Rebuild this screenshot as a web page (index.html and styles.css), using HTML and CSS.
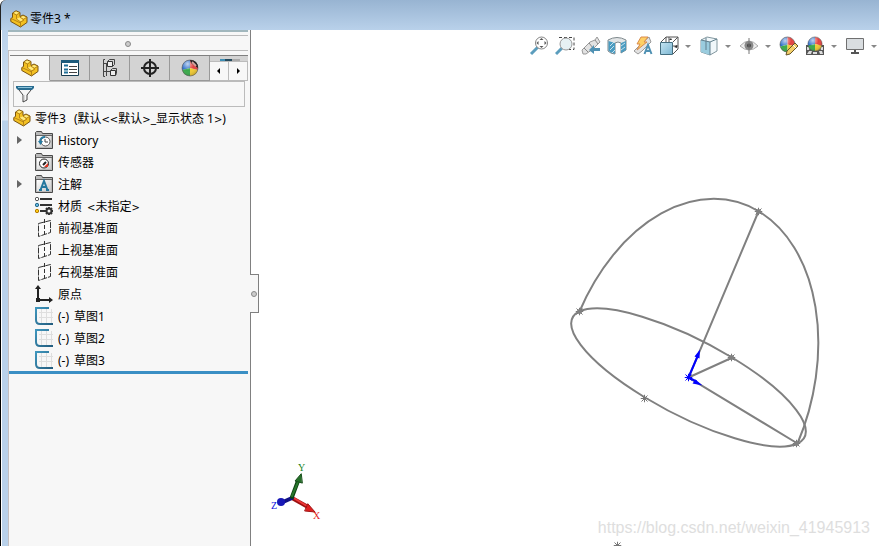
FILE: index.html
```html
<!DOCTYPE html>
<html lang="zh-CN">
<head>
<meta charset="utf-8">
<title>零件3</title>
<link rel="stylesheet" href="styles.css">
</head>
<body>
<svg class="defs" aria-hidden="true">
  <defs>
    <linearGradient id="sketchStroke" x1="0" y1="0" x2="1" y2="1"><stop offset="0" stop-color="#3f96bd"/><stop offset="1" stop-color="#235d7f"/></linearGradient>
    <linearGradient id="folderFill" x1="0" y1="0" x2="1" y2="1"><stop offset="0" stop-color="#fff"/><stop offset="1" stop-color="#c9c9c9"/></linearGradient>
    <linearGradient id="blueGlass" x1="0" y1="0" x2="1" y2="1"><stop offset="0" stop-color="#c5e5f2"/><stop offset="1" stop-color="#7cb6d2"/></linearGradient>
    <radialGradient id="gloss" cx=".35" cy=".25" r=".8"><stop offset="0" stop-color="#fff" stop-opacity=".7"/><stop offset=".5" stop-color="#fff" stop-opacity="0"/><stop offset="1" stop-color="#000" stop-opacity=".2"/></radialGradient>
    <symbol id="part" viewBox="0 0 18 18">
      <path d="M2.500 3 6 .8l4 1.700v4l3-1.500 4 2v5.500L10.500 17 .8 11.500V8.500l1.700-1z" fill="#f3c022" stroke="#7b5510" stroke-linejoin="round"/>
      <path d="M3.500 3 6 1.500 9 2.700 6.500 4.300zM10.500 7.500 13 6l3 1.400-2.600 1.500zM6.500 9l3-1.500L12 9v1.500l-2 1z" fill="#ffea80"/>
      <path d="M6.500 5v4L10.500 11.800V16.500M6.500 5 3 3.300M6.500 5l3-2M10.500 12l3-1.500V9.200l3-1.700M13.500 9.200 10 7.300M1 8.500l9.500 4.500" fill="none" stroke="#a97814" stroke-width=".8"/>
    </symbol>
    <symbol id="folder" viewBox="0 0 18 18">
      <path d="M.5 17.500V1.500l1-1h5l1 2h10v15z" fill="#b9b9b9" stroke="#494949"/>
      <path d="M2 5h14v11H2z" fill="url(#folderFill)"/><path d="M1 4.500h16" stroke="#666"/>
    </symbol>
    <symbol id="plane" viewBox="0 0 18 18">
      <path d="m3.500 4.500 12-3v12l-12 4z" fill="#fbfbfb" stroke="#343434" stroke-dasharray="6 1"/>
      <path d="M9.500 0v18" stroke="#343434" stroke-dasharray="4 2"/>
    </symbol>
    <symbol id="sketch" viewBox="0 0 18 18">
      <path d="M4 5.500h14M4 10.500h14M6.500 2v14M11.500 2v14M16.500 2v14" stroke="#dedede"/>
      <path d="M14 1H1v12q0 4 4 4h13" fill="none" stroke="url(#sketchStroke)" stroke-width="2"/>
    </symbol>
    <symbol id="ball" viewBox="0 0 18 18">
      <path d="M9 9V1a8 8 0 0 0-7.700 10z" fill="#2f70cb"/><path d="M9 9V1a8 8 0 0 1 7.700 10z" fill="#e34240"/><path d="M9 9l-7.700 2A8 8 0 0 0 9 17z" fill="#39a94a"/><path d="M9 9l7.700 2A8 8 0 0 1 9 17z" fill="#f2cb33"/><circle cx="9" cy="9" r="8" fill="url(#gloss)"/><circle cx="9" cy="9" r="8" fill="none" stroke="#555" stroke-opacity=".6"/>
    </symbol>
    <symbol id="star" viewBox="-4 -4 8 8"><path d="M-4 0h8M0-4v8M-3-3l6 6M3-3l-6 6" stroke="currentColor" fill="none"/></symbol>
  </defs>
</svg>

<header class="titlebar"><svg class="icon"><use href="#part"/></svg><h1>零件3 *</h1></header>

<div class="workspace">
  <aside class="panel">
    <div class="grip"><i class="dot"></i></div>
    <nav class="tabs">
      <button class="tab active" aria-label="设计树"><svg class="icon"><use href="#part"/></svg></button>
      <button class="tab" aria-label="属性"><svg class="icon" viewBox="0 0 18 18"><path d="M.5 1.500h17v15H.5z" fill="#fff" stroke="#173c51"/><path d="M0 1h18v3H0z" fill="#1d5b7c"/><path d="M3 6.500h4m-4 4h4m-4 3h4" stroke="#1e6f98" stroke-width="2"/><path d="M8 7.500h8m-8 3h8m-8 3h8" stroke="#444"/></svg></button>
      <button class="tab" aria-label="配置"><svg class="icon" viewBox="0 0 18 18"><path d="M4 .5H2.500v17H4M3 4.500h3M3 12.500h8M5.500 5v12" fill="none" stroke="#444"/><path d="M6.500 2.500h5v5h-5zM9.500 11.500h5v5h-5z" fill="#eee" stroke="#333"/><path d="m6.500 2.500 2-2h5v5l-2 2m-2 4 2-2h4v5l-1 2" fill="none" stroke="#444"/></svg></button>
      <button class="tab" aria-label="尺寸"><svg class="icon" viewBox="0 0 18 18"><circle cx="9" cy="9" r="6" fill="none" stroke="#222" stroke-width="2"/><path d="M9 0v18M0 9h18" stroke="#222" stroke-width="2"/></svg></button>
      <button class="tab" aria-label="外观"><svg class="icon" viewBox="0 0 18 18"><use href="#ball" width="18" height="18"/><path d="M9 1q8 0 8 8L10 4z" fill="#222"/><path d="m11 3 4 4" stroke="#d7a09b" stroke-width="2"/></svg></button>
      <div class="tab-end"><button aria-label="上一个"><svg viewBox="0 0 8 8"><path d="M5 1v6L2 4z"/></svg></button><button aria-label="下一个"><svg viewBox="0 0 8 8"><path d="M3 1v6l3-3z"/></svg></button></div>
    </nav>
    <label class="filter"><svg class="icon" viewBox="0 0 18 18"><path d="M1 2.500 7 10v7l4-2v-5l6-7.500z" fill="#f7f7f7" stroke="#444"/><path d="M8 10v5" stroke="#bbb"/><path d="M0 1h18v2l-2 2H2L0 3z" fill="#286c90"/><path d="M2 2.500h14" stroke="#8bc3db"/></svg><input type="text" aria-label="筛选"></label>
    <ul class="tree">
      <li class="root"><svg class="icon"><use href="#part"/></svg><span class="name">零件3</span><span>(默认<b>&lt;&lt;</b>默认<b>&gt;</b>_显示状态 1<b>&gt;</b>)</span></li>
      <li><i class="arrow"></i><svg class="icon" viewBox="0 0 18 18"><use href="#folder"/><circle cx="10.500" cy="10.500" r="4.500" fill="#fff" stroke="#555"/><path d="M10 8v3h3" fill="none" stroke="#444"/><path d="M3 10h5l-2.500 4z" fill="#287ba1"/><path d="M5 10q1-4 5-4" fill="none" stroke="#287ba1" stroke-width="2"/></svg><span>History</span></li>
      <li><svg class="icon" viewBox="0 0 18 18"><use href="#folder"/><circle cx="9" cy="10.500" r="4.500" fill="#fff" stroke="#222"/><path d="m8 12 3-3" stroke="#222" stroke-width="2"/><path d="M13 10v4H9" fill="#df3520"/></svg><span>传感器</span></li>
      <li><i class="arrow"></i><svg class="icon" viewBox="0 0 18 18"><use href="#folder"/><path d="m5.500 15 3.500-9 3.500 9M6.500 12h5M4 15h3m4 0h3" fill="none" stroke="#24779e" stroke-width="2"/></svg><span>注解</span></li>
      <li><svg class="icon" viewBox="0 0 18 18"><path d="M5 2h12M5 8h12M5 14h5" stroke="#333" stroke-width="2"/><circle cx="2" cy="2" r="1.700" fill="#fff" stroke="#555"/><circle cx="2" cy="8" r="1.700" fill="#62b5df" stroke="#286b8b"/><circle cx="2" cy="14" r="1.700" fill="#ffca16" stroke="#b47c00"/><circle cx="14" cy="14" r="2.500" fill="none" stroke="#333" stroke-width="2"/><path d="M14 10v2m0 4v2m-4-4h2m4 0h2m-7-3 1 1m4 4 1 1m0-6-1 1m-4 4-1 1" stroke="#333" stroke-width="2"/></svg><span class="name">材质</span><span><b>&lt;</b>未指定<b>&gt;</b></span></li>
      <li><svg class="icon"><use href="#plane"/></svg><span>前视基准面</span></li>
      <li><svg class="icon"><use href="#plane"/></svg><span>上视基准面</span></li>
      <li><svg class="icon"><use href="#plane"/></svg><span>右视基准面</span></li>
      <li><svg class="icon" viewBox="0 0 18 18"><path d="M3 2v13h13" fill="none" stroke="#222" stroke-width="2"/><path d="m3 0 3 4H0zM18 15l-4-3v6zM1 13h4v4H1z" fill="#222"/></svg><span>原点</span></li>
      <li><svg class="icon"><use href="#sketch"/></svg><span>(-)</span><span>草图1</span></li>
      <li><svg class="icon"><use href="#sketch"/></svg><span>(-)</span><span>草图2</span></li>
      <li><svg class="icon"><use href="#sketch"/></svg><span>(-)</span><span>草图3</span></li>
    </ul>
    <button class="splitter" aria-label="折叠面板"><i class="dot"></i></button>
  </aside>

  <main class="viewport">
    <svg class="scene" viewBox="251 30 628 516" preserveAspectRatio="xMinYMin slice" role="img" aria-label="草图">
      <g transform="translate(.5 .5)">
        <g fill="none" stroke="#808080" stroke-width="2">
          <circle r="1" transform="matrix(109 66 43.500 -20 688 377)" vector-effect="non-scaling-stroke"/>
          <path d="M-1 0A1 1 0 0 1 1 0" transform="matrix(109 66 -70.500 166 688 377)" vector-effect="non-scaling-stroke"/>
          <path d="m758 211-70 166 109 66M688 377l44-20"/>
        </g>
        <g color="#777"><use href="#star" x="754" y="207" width="8" height="8"/><use href="#star" x="575" y="307" width="8" height="8"/><use href="#star" x="727" y="353" width="8" height="8"/><use href="#star" x="640" y="394" width="8" height="8"/><use href="#star" x="792" y="439" width="8" height="8"/><use href="#star" x="613" y="541" width="8" height="8"/></g>
        <g fill="#808080"><circle cx="758" cy="211" r="2.500"/><circle cx="579" cy="311" r="2.500"/><circle cx="731" cy="357" r="2.500"/><circle cx="796" cy="443" r="2.500"/></g>
        <g fill="#00f" color="#00f"><path d="m688 377 9-21M688 377l8 4" stroke="#00f" stroke-width="2"/><path d="m699.500 349-5.500 7 5 2zM702 385l-7-6-3 4z"/><use href="#star" x="684" y="373" width="8" height="8"/><circle cx="688" cy="377" r="2"/></g>
      </g>
      <g stroke-linecap="round">
        <path d="m292 498 16 9" stroke="#9c1010" stroke-width="4"/><path d="m292 497 15 9" stroke="#ee3838" stroke-width="2"/><path d="m308 504 7 8-10-1z" fill="#df2020" stroke="#a01414"/>
        <path d="m292 498-9 4" stroke="#111184" stroke-width="4"/><circle cx="281" cy="502" r="4" fill="#1818b6"/>
        <path d="m292 497 6-16" stroke="#0d4312" stroke-width="4"/><path d="m292 496 6-14" stroke="#28772c" stroke-width="2"/><path d="m301 474-6 7 7 2z" fill="#267029" stroke="#174e1a"/>
      </g>
      <g class="axis"><text x="298" y="471" fill="#16821b">Y</text><text x="313" y="519" fill="#e21b1b">X</text><text x="271" y="509" fill="#1010dd">Z</text></g>
    </svg>
    <div class="tools">
      <button aria-label="整屏显示"><svg class="tool" viewBox="0 0 20 20"><path d="m2 18 7-7" stroke="#5b9dbd" stroke-width="3"/><circle cx="12.500" cy="7" r="6" fill="#fff" stroke="#858585"/><path d="m12.500 2 2 2h-4zm0 10 2-2h-4zM7.500 7l2-2v4zm10 0-2-2v4z" fill="#555"/></svg></button>
      <button aria-label="局部放大"><svg class="tool" viewBox="0 0 20 20"><path d="M4 1.500h15v12h-5" fill="none" stroke="#444" stroke-dasharray="3 2"/><path d="m1 18 6-6" stroke="#5b9dbd" stroke-width="3"/><circle cx="11" cy="8" r="6" fill="#e6f1f4" stroke="#999"/></svg></button>
      <button aria-label="上一视图"><svg class="tool" viewBox="0 0 20 20"><path d="m1 14 8-8 5-2 2-3 3 5-3 3-4 4-7 5H2z" fill="#e2e2e2" stroke="#999"/><path d="m8 7 4 5m2-8 3 4M3 12l4 4" stroke="#888"/><path d="M19 12h-6V9l-5 5 5 4v-3h6z" fill="#4f91b3"/></svg></button>
      <button aria-label="剖面视图"><svg class="tool" viewBox="0 0 20 20"><path d="M1 4q9-5 18 0v10l-5 3V7q-3-2-6 0v11q-4 0-7-3z" fill="#e2e5e6" stroke="#7e888c"/><path d="M1.500 5 8 7v10.500q-4 0-6.500-3zM14 7l5-2v9l-5 3z" fill="#4b9bc0"/><path d="m3 10 4-4M3 14l4-4m-2 7 3-3m6-4 4-3m-4 7 4-3" stroke="#c5e2ee"/></svg></button>
      <button aria-label="动态注解"><svg class="tool" viewBox="0 0 20 20"><path d="m1 15 9-9 6-5 2 5-9 9-4 3z" fill="#e2e2e2" stroke="#999"/><path d="M8 1h7l-4 5h3L4 14l3-6H4z" fill="#ffd064" stroke="#d98b4c"/><path d="m11.500 18 3.500-9 3.500 9m-6-3h5" fill="none" stroke="#4f91b3" stroke-width="2"/></svg></button>
      <button class="wide" aria-label="视图定向"><svg class="tool" viewBox="0 0 20 20"><path d="m2 6 5-5h12v12l-5 5M7 1v5M14 6l5-5M10 1v5m4 4h5" fill="none" stroke="#555"/><path d="M1.500 6.500h12v12h-12z" fill="url(#blueGlass)" stroke="#446e80"/><path d="m12 2 1 2h-3zm3 9 3-2v3z" fill="#333"/></svg><i class="caret"></i></button>
      <button class="wide" aria-label="显示样式"><svg class="tool" viewBox="0 0 20 20"><path d="m2 4 6-3 10 2v12l-7 4-9-3z" fill="#f0f7fa" stroke="#82979f"/><path d="m2 4 9 2v13l-9-3z" fill="#9accde"/><path d="m2 4 9 2 7-3M11 6v13M7 2v12" fill="none" stroke="#607f8c"/></svg><i class="caret"></i></button>
      <button class="wide" aria-label="隐藏项目"><svg class="tool" viewBox="0 0 20 20"><path d="M1 10q9-10 18 0-9 8-18 0z" fill="#eee" stroke="#aaa"/><circle cx="10" cy="9.500" r="4.500" fill="#888"/><circle cx="10" cy="9.500" r="2" fill="#444"/><path d="M10 2v16" stroke="#777"/></svg><i class="caret"></i></button>
      <button aria-label="编辑外观"><svg class="tool" viewBox="0 0 20 20"><use href="#ball" width="17" height="17"/><path d="m8 15 8-8 3 3-8 8-4 1z" fill="#f4d06a" stroke="#665428"/><path d="m14 9 3 3" stroke="#fff"/></svg></button>
      <button class="wide" aria-label="应用布景"><svg class="tool" viewBox="0 0 20 20"><path d="M1 9h18v10H1z" fill="#555"/><path d="m2 18 2-3h3l-1 3zm6-2h4v2H8zm6-1h3l1 3h-3zM2 11h3l-1 3H2zm13 0h3v3h-2z" fill="#ddd"/><use href="#ball" x="2" width="16" height="16"/></svg><i class="caret"></i></button>
      <button class="wide" aria-label="视图设置"><svg class="tool" viewBox="0 0 20 20"><path d="M1.500 2.500h17v11h-17z" fill="#d9dde0" stroke="#707070"/><path d="M10 14v3m-4 0h8" stroke="#555" stroke-width="2"/></svg><i class="caret"></i></button>
    </div>
    <p class="watermark">https://blog.csdn.net/weixin_41945913</p>
  </main>
</div>
</body>
</html>
```
FILE: styles.css
```css
* { box-sizing: border-box; }
body {
  margin: 0;
  min-height: 100vh;
  display: flex;
  flex-direction: column;
  overflow: hidden;
  background: #fff;
  color: #000;
  font: 12px/22px "Noto Sans", "Noto Sans CJK SC", sans-serif;
}
button { padding: 0; border: 0; background: none; font: inherit; }
.defs { position: absolute; width: 0; height: 0; }
.icon { display: block; flex: none; width: 18px; height: 18px; }
.titlebar {
  display: flex;
  align-items: center;
  gap: 2px;
  height: 30px;
  padding: 7px 9px 0;
  border-left: 1px solid #222;
  border-top-left-radius: 6px;
  background: linear-gradient(#98b4d2, #b9d1ea);
}
h1 { margin: 0; padding-top: 1px; font: inherit; }
.workspace {
  flex: 1;
  display: flex;
  border-left: 1px solid #000;
}
.panel {
  position: relative;
  flex: none;
  width: 250px;
  padding-left: 8px;
  border-right: 1px solid #808080;
  background:
    linear-gradient(#c4bfc0, #c4bfc0) 7px 0 / 1px 100% no-repeat,
    linear-gradient(#fff, #fff) 0 0 / 1px 100% no-repeat,
    linear-gradient(#b9d1ea, #d9e6f4 90px, #b9d1ea 91px) 0 0 / 7px 100% no-repeat,
    #f7f7f7;
}
.grip {
  display: flex;
  align-items: center;
  justify-content: center;
  height: 21px;
  margin: 0 2px 0 -1px;
  padding-top: 5px;
  border-top: 2px solid #a1b7bd;
  border-bottom: 1px solid #bbb;
  background: linear-gradient(#bbb, #bbb) 0 3px / 100% 1px no-repeat, #f7f7f7;
}
.dot { width: 6px; height: 6px; border: 1px solid #888; border-radius: 50%; background: #ccc; }
.tabs {
  display: flex;
  height: 26px;
  margin: 4px 2px 0 1px;
  border-top: 1px solid #808080;
}
.tab {
  display: grid;
  place-items: center;
  width: 40px;
  border-right: 1px solid #999;
  border-bottom: 1px solid #999;
  background: #d3d3d3;
}
.tab.active { border-bottom-color: transparent; background: #f7f7f7; }
.tab-end {
  flex: 1;
  display: flex;
  padding-top: 5px;
  background:
    linear-gradient(90deg, #3f8fb5 0 5px, #244a5e 5px 12px, #aaa 12px) 10px 3px / 20px 2px no-repeat,
    #d3d3d3;
}
.tab-end button { flex: 1; display: grid; place-items: center; border: 1px solid #bbb; border-left: 0; background: #f7f7f7; }
.tab-end svg { width: 8px; height: 8px; }
.filter {
  display: flex;
  align-items: center;
  height: 26px;
  margin: 0 5px 0 4px;
  padding: 0 2px;
  border: 1px solid #bbb;
}
.filter input { flex: 1; min-width: 0; border: 0; outline: 0; background: none; }
.tree {
  margin: 0 2px 0 0;
  padding: 0;
  border-bottom: 3px solid #3a8fc4;
  list-style: none;
  white-space: nowrap;
}
.tree li { display: flex; align-items: center; gap: 5px; height: 22px; padding-left: 26px; }
.tree .root { gap: 4px; padding-left: 4px; }
.tree span { padding-top: 2px; }
.tree b { font: 10px/10px "DejaVu Sans", sans-serif; }
.root .name { padding-right: 4px; }
.arrow {
  width: 0;
  margin: 0 8px 0 -18px;
  border: 4px solid transparent;
  border-left: 5px solid #666;
  border-right: 0;
}
.splitter {
  position: absolute;
  top: 244px;
  right: -9px;
  z-index: 1;
  display: grid;
  place-items: center;
  width: 9px;
  height: 39px;
  border: 1px solid #808080;
  border-left: 0;
  background: #f7f7f7;
}
.viewport { position: relative; flex: 1; min-width: 0; overflow: hidden; }
.scene { position: absolute; inset: 0; width: 100%; height: 100%; }
.axis { font: 10px "Liberation Serif", serif; }
.tools {
  position: relative;
  display: flex;
  align-items: center;
  gap: 6px;
  height: 32px;
  padding-left: 278px;
}
.tools button { flex: none; display: flex; align-items: center; }
.tool { width: 20px; height: 20px; }
.wide { gap: 6px; padding-right: 2px; }
.caret { border: 3px solid transparent; border-top-color: #888; border-bottom: 0; }
.watermark {
  position: absolute;
  right: 9px;
  bottom: 8px;
  margin: 0;
  color: #dedede;
  font: 16px/20px "Liberation Sans", sans-serif;
}
```
